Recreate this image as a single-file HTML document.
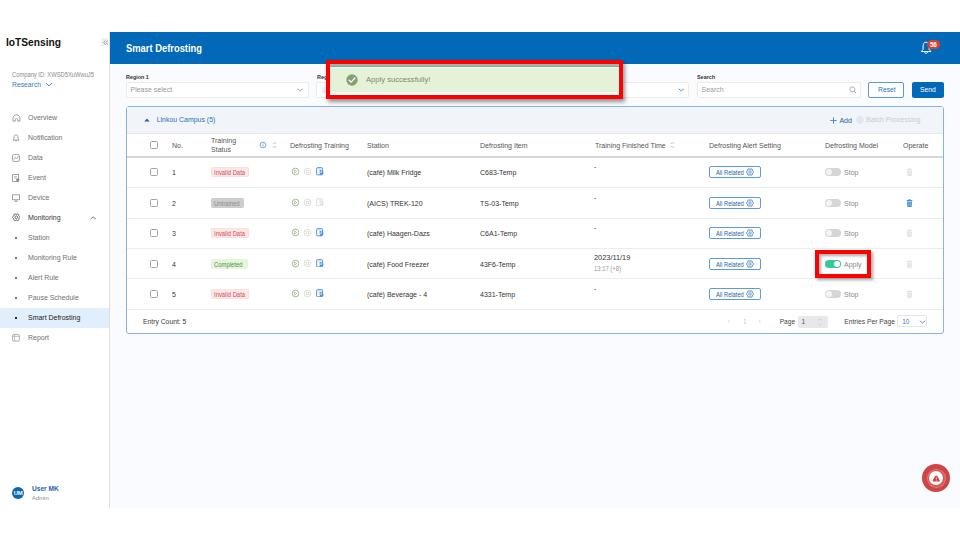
<!DOCTYPE html>
<html><head><meta charset="utf-8">
<style>
*{margin:0;padding:0;box-sizing:border-box}
html,body{width:960px;height:540px;overflow:hidden;background:#fff;font-family:"Liberation Sans",sans-serif;position:relative}
.a{position:absolute;white-space:nowrap}
#side{position:absolute;left:0;top:32px;width:110px;height:476px;background:#fff;border-right:1px solid #dedfe2}
#main{position:absolute;left:110px;top:32px;width:850px;height:476px;background:#f9fbfe}
#hdr{position:absolute;left:110px;top:32px;width:850px;height:32px;background:#0268b8}
.nav{position:absolute;left:28px;font-size:7.3px;color:#707070;transform:scaleX(.955);transform-origin:0 0}
.ico{position:absolute;left:12px}
.dot{position:absolute;left:15.2px;width:1.6px;height:1.6px;background:#777}
.lbl{position:absolute;font-size:5.9px;color:#333;font-weight:bold;top:73.6px;transform:scaleX(.92);transform-origin:0 0}
.sel{position:absolute;top:82px;height:15.5px;background:#fff;border:1px solid #e9ebef;border-radius:2px}
.card{position:absolute;left:126px;top:106.2px;width:818px;height:228px;border:1.2px solid #84b4df;border-radius:3px;background:#fff;overflow:hidden}
.th{position:absolute;font-size:7.4px;color:#555;transform:scaleX(.95);transform-origin:0 0}
.td{position:absolute;font-size:7.4px;color:#333;transform:scaleX(.95);transform-origin:0 0}
.cb{position:absolute;left:150px;width:8px;height:8px;border:1px solid #a4a4a4;border-radius:1.5px;background:#fff}
.badge{position:absolute;left:210.8px;height:9.8px;border-radius:2px;font-size:6.4px;line-height:11.2px;padding-left:3.5px}
.badge span{display:inline-block;transform:scaleX(.92);transform-origin:0 0}
.bad{background:#fde8e8;color:#d24d55;box-shadow:inset 0 0 0 0.6px #fbd8d8}
.rowline{position:absolute;left:127px;width:816px;height:1px;background:#ececec}
.ar{position:absolute;left:709px;width:51.5px;height:12.2px;border:1px solid #5d9cdb;border-radius:2px;font-size:6.4px;color:#2b5fa6;line-height:11.2px;padding-left:5.7px}
.art{display:inline-block;transform:scaleX(.9);transform-origin:0 0}
.tg{position:absolute;left:825px;width:16px;height:8px;border-radius:4px;background:#d6d6d6}
.tg::after{content:"";position:absolute;left:1px;top:1px;width:6px;height:6px;border-radius:50%;background:#f4f4f4}
.stop{position:absolute;left:844px;font-size:7.4px;color:#8a8a8a;transform:scaleX(.95);transform-origin:0 0}
.unt{background:#cdcdcd;color:#8c8c8c}
.cmp{background:#e5f6dc;color:#5b8f4a}
.tg.on{background:#38c69d}
.tg.on::after{left:9px;background:#fff}
</style></head><body>
<div id="side"></div>
<div id="main"></div>
<div id="hdr"></div>

<!-- sidebar -->
<div class="a" style="left:6px;top:36.5px;font-size:10.2px;font-weight:bold;color:#111">IoTSensing</div>
<div class="a" style="left:100.7px;top:38.2px;width:7.5px;height:7.6px;background:#f0f1f3"></div>
<svg class="a" style="left:102.5px;top:39.6px" width="5.5" height="5.2" viewBox="0 0 5.5 5.2"><path d="M2.5 0.4 L0.6 2.6 L2.5 4.8 M4.9 0.4 L3 2.6 L4.9 4.8" fill="none" stroke="#8c8c8c" stroke-width="0.8"/></svg>
<div class="a" style="left:12px;top:70.7px;font-size:6.5px;transform:scaleX(.89);transform-origin:0 0;color:#8a8a8a">Company ID: XWSD5XuWwuJ5</div>
<div class="a" style="left:12px;top:80.4px;font-size:7.3px;transform:scaleX(.93);transform-origin:0 0;color:#3a7bc8">Research</div>
<svg class="a" style="left:45px;top:82px" width="8" height="5" viewBox="0 0 8 5"><path d="M1 1.2 L4 3.8 L7 1.2" fill="none" stroke="#3a7bc8" stroke-width="0.9"/></svg>

<div class="nav" style="top:113.2px">Overview</div>
<div class="nav" style="top:133.2px">Notification</div>
<div class="nav" style="top:153.2px">Data</div>
<div class="nav" style="top:173.2px">Event</div>
<div class="nav" style="top:193.2px">Device</div>
<div class="nav" style="top:213.2px;color:#333">Monitoring</div>
<div class="nav" style="top:233.2px">Station</div>
<div class="nav" style="top:253.2px">Monitoring Rule</div>
<div class="nav" style="top:273.2px">Alert Rule</div>
<div class="nav" style="top:293.2px">Pause Schedule</div>
<div class="a" style="left:0;top:308px;width:109px;height:19.6px;background:#e1eefb"></div>
<div class="nav" style="top:313.2px;color:#222">Smart Defrosting</div>
<div class="nav" style="top:333.2px">Report</div>
<div class="dot" style="top:237px"></div>
<div class="dot" style="top:257px"></div>
<div class="dot" style="top:277px"></div>
<div class="dot" style="top:297px"></div>
<div class="dot" style="top:317px;background:#222"></div>

<!-- user -->
<div class="a" style="left:12px;top:487.3px;width:12px;height:12px;border-radius:50%;background:#0a66b8;color:#fff;font-size:6px;font-weight:bold;line-height:12.4px;text-align:center;letter-spacing:-0.3px">UM</div>
<div class="a" style="left:32px;top:485.2px;font-size:6.6px;font-weight:bold;color:#1f5fae">User MK</div>
<div class="a" style="left:32px;top:494.1px;font-size:6.2px;transform:scaleX(.95);transform-origin:0 0;color:#8e8e8e">Admin</div>

<!-- header -->
<div class="a" style="left:126px;top:43.4px;font-size:10.2px;transform:scaleX(0.92);transform-origin:0 0;font-weight:bold;color:#fff">Smart Defrosting</div>

<!-- filters -->
<div class="lbl" style="left:126px">Region 1</div>
<div class="lbl" style="left:316.5px">Region 2</div>
<div class="lbl" style="left:697px">Search</div>
<div class="sel" style="left:126px;width:182.5px"></div>
<div class="sel" style="left:316px;width:182.3px"></div>
<div class="sel" style="left:506.5px;width:182px"></div>
<div class="sel" style="left:697px;width:163.5px"></div>
<div class="a" style="left:130.5px;top:85.8px;font-size:7px;color:#999">Please select</div>
<div class="a" style="left:701.5px;top:85.8px;font-size:7px;color:#9c9c9c">Search</div>
<div class="a" style="left:868.3px;top:82px;width:35.5px;height:15.8px;border:1px solid #5a9ad8;border-radius:2px;background:#fff"></div><div class="a" style="left:877.5px;top:85.1px;color:#2f73bf;font-size:7.8px;transform:scaleX(.87);transform-origin:0 0">Reset</div>
<div class="a" style="left:911.5px;top:82px;width:32.5px;height:15.8px;border-radius:2px;background:#0268b8"></div><div class="a" style="left:920px;top:85.1px;color:#fff;font-size:7.8px;transform:scaleX(.87);transform-origin:0 0">Send</div>

<!-- card -->
<div class="card"></div>
<div class="a" style="left:127px;top:107.4px;width:816px;height:25.4px;background:#f1f4f8"></div>
<div class="a" style="left:127px;top:132.6px;width:816px;height:0.6px;background:#ebe8e4"></div>
<svg class="a" style="left:143.5px;top:117.6px" width="6" height="4" viewBox="0 0 6 4"><path d="M0.3 3.6 L3 0.4 L5.7 3.6 Z" fill="#1f64b0"/></svg>
<div class="a" style="left:156.7px;top:115.5px;font-size:6.95px;color:#2c6fb8">Linkou Campus (5)</div>
<svg class="a" style="left:830px;top:116.5px" width="7" height="7" viewBox="0 0 7 7"><path d="M3.5 0.3 V6.7 M0.3 3.5 H6.7" stroke="#3d86cf" stroke-width="0.9"/></svg>
<div class="a" style="left:839.4px;top:116.6px;font-size:7px;color:#2a62aa">Add</div>
<svg class="a" style="left:855.5px;top:116px" width="8" height="8" viewBox="0 0 10 10"><path d="M5.00 1.60 L5.46 1.48 L6.01 1.23 L6.63 1.07 L7.20 1.19 L7.59 1.63 L7.76 2.24 L7.81 2.84 L7.94 3.30 L8.28 3.64 L8.77 3.99 L9.22 4.44 L9.40 5.00 L9.22 5.56 L8.77 6.01 L8.28 6.36 L7.94 6.70 L7.81 7.16 L7.76 7.76 L7.59 8.37 L7.20 8.81 L6.63 8.93 L6.01 8.77 L5.46 8.52 L5.00 8.40 L4.54 8.52 L3.99 8.77 L3.37 8.93 L2.80 8.81 L2.41 8.37 L2.24 7.76 L2.19 7.16 L2.06 6.70 L1.72 6.36 L1.23 6.01 L0.78 5.56 L0.60 5.00 L0.78 4.44 L1.23 3.99 L1.72 3.64 L2.06 3.30 L2.19 2.84 L2.24 2.24 L2.41 1.63 L2.80 1.19 L3.37 1.07 L3.99 1.23 L4.54 1.48 Z" fill="none" stroke="#cfd3d8" stroke-width="0.9"/><circle cx="5" cy="5" r="1.7" fill="none" stroke="#cfd3d8" stroke-width="0.9"/></svg>
<div class="a" style="left:866px;top:115.5px;font-size:7px;color:#c9cdd2">Batch Processing</div>
<div class="a" style="left:127px;top:155.7px;width:816px;height:2px;background:#d6d6d6"></div>
<div class="cb" style="top:141px"></div>
<div class="th" style="left:171.5px;top:140.9px">No.</div>
<div class="th" style="left:210.5px;top:136.6px;line-height:8.9px">Training<br>Status</div>
<svg class="a" style="left:259.2px;top:141px" width="8" height="8" viewBox="0 0 8 8"><circle cx="4" cy="4" r="2.9" fill="none" stroke="#4a90d8" stroke-width="0.75"/><rect x="3.65" y="2.3" width="0.7" height="0.7" fill="#4a90d8"/><rect x="3.65" y="3.4" width="0.7" height="2.3" fill="#4a90d8"/></svg>
<svg class="a" style="left:271.5px;top:141px" width="5" height="8" viewBox="0 0 5 8"><path d="M0.8 3 L2.5 1.2 L4.2 3 M0.8 5 L2.5 6.8 L4.2 5" fill="none" stroke="#aaa" stroke-width="0.7"/></svg>
<div class="th" style="left:289.6px;top:140.9px">Defrosting Training</div>
<div class="th" style="left:367px;top:140.9px">Station</div>
<div class="th" style="left:480.3px;top:140.9px">Defrosting Item</div>
<div class="th" style="left:594.7px;top:140.9px">Training Finished Time</div>
<svg class="a" style="left:669.5px;top:141px" width="5" height="8" viewBox="0 0 5 8"><path d="M0.8 3 L2.5 1.2 L4.2 3 M0.8 5 L2.5 6.8 L4.2 5" fill="none" stroke="#aaa" stroke-width="0.7"/></svg>
<div class="th" style="left:709px;top:140.9px">Defrosting Alert Setting</div>
<div class="th" style="left:825px;top:140.9px">Defrosting Model</div>
<div class="th" style="left:903px;top:140.9px">Operate</div>
<div class="cb" style="top:168.2px"></div>
<div class="td" style="left:171.5px;top:168.4px">1</div>
<div class="badge bad" style="top:167.4px;width:38.4px"><span>Invalid Data</span></div>
<svg class="a" style="left:291px;top:167.0px" width="9" height="9" viewBox="0 0 9 9"><circle cx="4.5" cy="4.5" r="3.3" fill="none" stroke="#a6bb93" stroke-width="1"/><path d="M3.6 2.9 L5.9 4.5 L3.6 6.1 Z" fill="none" stroke="#a9bd98" stroke-width="0.8"/></svg>
<svg class="a" style="left:303px;top:167.0px" width="9" height="9" viewBox="0 0 9 9"><circle cx="4.5" cy="4.5" r="3.3" fill="none" stroke="#dddddd" stroke-width="1"/><rect x="3.3" y="3.3" width="2.4" height="2.4" fill="none" stroke="#dcdcdc" stroke-width="0.8"/></svg>
<svg class="a" style="left:315.5px;top:167.2px" width="8" height="8.5" viewBox="0 0 8 8.5"><rect x="0.65" y="0.65" width="5.9" height="7.2" rx="0.8" fill="#dceaf8" stroke="#5596dc" stroke-width="1"/><path d="M2 2.2 V6.4 H4" fill="none" stroke="#fff" stroke-width="1.1"/><path d="M3.8 2.8 L7.4 4.4 L7.4 6.6 L5.8 7.8 L3.8 7.8 Z" fill="#4d92da"/><path d="M4.6 3.9 L6.3 5.1 L4.6 6.3 Z" fill="#fff"/></svg>
<div class="td" style="left:367px;top:168.4px">(café) Milk Fridge</div>
<div class="td" style="left:480.3px;top:168.4px">C683-Temp</div>
<div class="td" style="left:594.1px;top:162.0px">-</div>
<div class="ar" style="top:166.2px"><span class="art">All Related</span><svg style="position:absolute;left:35.7px;top:1.1px" width="8" height="8" viewBox="0 0 10 10"><path d="M5.00 1.60 L5.46 1.48 L6.01 1.23 L6.63 1.07 L7.20 1.19 L7.59 1.63 L7.76 2.24 L7.81 2.84 L7.94 3.30 L8.28 3.64 L8.77 3.99 L9.22 4.44 L9.40 5.00 L9.22 5.56 L8.77 6.01 L8.28 6.36 L7.94 6.70 L7.81 7.16 L7.76 7.76 L7.59 8.37 L7.20 8.81 L6.63 8.93 L6.01 8.77 L5.46 8.52 L5.00 8.40 L4.54 8.52 L3.99 8.77 L3.37 8.93 L2.80 8.81 L2.41 8.37 L2.24 7.76 L2.19 7.16 L2.06 6.70 L1.72 6.36 L1.23 6.01 L0.78 5.56 L0.60 5.00 L0.78 4.44 L1.23 3.99 L1.72 3.64 L2.06 3.30 L2.19 2.84 L2.24 2.24 L2.41 1.63 L2.80 1.19 L3.37 1.07 L3.99 1.23 L4.54 1.48 Z" fill="none" stroke="#2a6db8" stroke-width="1.1"/><circle cx="5" cy="5" r="1.5" fill="none" stroke="#2a6db8" stroke-width="0.8"/></svg></div>
<div class="tg" style="top:168.2px"></div>
<div class="stop" style="top:168.2px">Stop</div>
<svg class="a" style="left:905.6px;top:168.4px" width="7" height="8" viewBox="0 0 7 8"><path d="M0.4 2 C0.4 1.3 1.2 1 2.2 1 H4.8 C5.8 1 6.6 1.3 6.6 2 Z" fill="#e3e3e3"/><rect x="2.4" y="0.2" width="2.2" height="1" rx="0.4" fill="#e3e3e3"/><path d="M1 2.4 H6 L5.7 7.4 C5.7 7.7 5.4 7.9 5.1 7.9 H1.9 C1.6 7.9 1.3 7.7 1.3 7.4 Z" fill="#e3e3e3"/><path d="M2.7 3.3 V7 M4.3 3.3 V7" stroke="#fff" stroke-width="0.45" opacity="0.7"/></svg>
<div class="rowline" style="top:187.0px"></div>
<div class="cb" style="top:198.7px"></div>
<div class="td" style="left:171.5px;top:198.9px">2</div>
<div class="badge unt" style="top:197.9px;width:33px"><span>Untrained</span></div>
<svg class="a" style="left:291px;top:197.5px" width="9" height="9" viewBox="0 0 9 9"><circle cx="4.5" cy="4.5" r="3.3" fill="none" stroke="#a6bb93" stroke-width="1"/><path d="M3.6 2.9 L5.9 4.5 L3.6 6.1 Z" fill="none" stroke="#a9bd98" stroke-width="0.8"/></svg>
<svg class="a" style="left:303px;top:197.5px" width="9" height="9" viewBox="0 0 9 9"><circle cx="4.5" cy="4.5" r="3.3" fill="none" stroke="#dddddd" stroke-width="1"/><rect x="3.3" y="3.3" width="2.4" height="2.4" fill="none" stroke="#dcdcdc" stroke-width="0.8"/></svg>
<svg class="a" style="left:315.5px;top:197.7px" width="8" height="8.5" viewBox="0 0 8 8.5"><rect x="0.65" y="0.65" width="5.9" height="7.2" rx="0.8" fill="#f5f5f5" stroke="#dedede" stroke-width="1"/><path d="M2 2.2 V6.4 H4" fill="none" stroke="#fff" stroke-width="1.1"/><path d="M3.8 2.6 L7.6 4.3 L7.6 6.6 L5.8 7.8 L3.8 7.8 Z" fill="#e0e0e0"/><path d="M4.6 3.9 L6.3 5.1 L4.6 6.3 Z" fill="#fff"/></svg>
<div class="td" style="left:367px;top:198.9px">(AICS) TREK-120</div>
<div class="td" style="left:480.3px;top:198.9px">TS-03-Temp</div>
<div class="td" style="left:594.1px;top:192.5px">-</div>
<div class="ar" style="top:196.7px"><span class="art">All Related</span><svg style="position:absolute;left:35.7px;top:1.1px" width="8" height="8" viewBox="0 0 10 10"><path d="M5.00 1.60 L5.46 1.48 L6.01 1.23 L6.63 1.07 L7.20 1.19 L7.59 1.63 L7.76 2.24 L7.81 2.84 L7.94 3.30 L8.28 3.64 L8.77 3.99 L9.22 4.44 L9.40 5.00 L9.22 5.56 L8.77 6.01 L8.28 6.36 L7.94 6.70 L7.81 7.16 L7.76 7.76 L7.59 8.37 L7.20 8.81 L6.63 8.93 L6.01 8.77 L5.46 8.52 L5.00 8.40 L4.54 8.52 L3.99 8.77 L3.37 8.93 L2.80 8.81 L2.41 8.37 L2.24 7.76 L2.19 7.16 L2.06 6.70 L1.72 6.36 L1.23 6.01 L0.78 5.56 L0.60 5.00 L0.78 4.44 L1.23 3.99 L1.72 3.64 L2.06 3.30 L2.19 2.84 L2.24 2.24 L2.41 1.63 L2.80 1.19 L3.37 1.07 L3.99 1.23 L4.54 1.48 Z" fill="none" stroke="#2a6db8" stroke-width="1.1"/><circle cx="5" cy="5" r="1.5" fill="none" stroke="#2a6db8" stroke-width="0.8"/></svg></div>
<div class="tg" style="top:198.7px"></div>
<div class="stop" style="top:198.7px">Stop</div>
<svg class="a" style="left:905.6px;top:198.9px" width="7" height="8" viewBox="0 0 7 8"><path d="M0.4 2 C0.4 1.3 1.2 1 2.2 1 H4.8 C5.8 1 6.6 1.3 6.6 2 Z" fill="#4a90d8"/><rect x="2.4" y="0.2" width="2.2" height="1" rx="0.4" fill="#4a90d8"/><path d="M1 2.4 H6 L5.7 7.4 C5.7 7.7 5.4 7.9 5.1 7.9 H1.9 C1.6 7.9 1.3 7.7 1.3 7.4 Z" fill="#4a90d8"/><path d="M2.7 3.3 V7 M4.3 3.3 V7" stroke="#fff" stroke-width="0.45" opacity="0.7"/></svg>
<div class="rowline" style="top:217.5px"></div>
<div class="cb" style="top:229.2px"></div>
<div class="td" style="left:171.5px;top:229.4px">3</div>
<div class="badge bad" style="top:228.4px;width:38.4px"><span>Invalid Data</span></div>
<svg class="a" style="left:291px;top:228.0px" width="9" height="9" viewBox="0 0 9 9"><circle cx="4.5" cy="4.5" r="3.3" fill="none" stroke="#a6bb93" stroke-width="1"/><path d="M3.6 2.9 L5.9 4.5 L3.6 6.1 Z" fill="none" stroke="#a9bd98" stroke-width="0.8"/></svg>
<svg class="a" style="left:303px;top:228.0px" width="9" height="9" viewBox="0 0 9 9"><circle cx="4.5" cy="4.5" r="3.3" fill="none" stroke="#dddddd" stroke-width="1"/><rect x="3.3" y="3.3" width="2.4" height="2.4" fill="none" stroke="#dcdcdc" stroke-width="0.8"/></svg>
<svg class="a" style="left:315.5px;top:228.2px" width="8" height="8.5" viewBox="0 0 8 8.5"><rect x="0.65" y="0.65" width="5.9" height="7.2" rx="0.8" fill="#dceaf8" stroke="#5596dc" stroke-width="1"/><path d="M2 2.2 V6.4 H4" fill="none" stroke="#fff" stroke-width="1.1"/><path d="M3.8 2.8 L7.4 4.4 L7.4 6.6 L5.8 7.8 L3.8 7.8 Z" fill="#4d92da"/><path d="M4.6 3.9 L6.3 5.1 L4.6 6.3 Z" fill="#fff"/></svg>
<div class="td" style="left:367px;top:229.4px">(café) Haagen-Dazs</div>
<div class="td" style="left:480.3px;top:229.4px">C6A1-Temp</div>
<div class="td" style="left:594.1px;top:223.0px">-</div>
<div class="ar" style="top:227.2px"><span class="art">All Related</span><svg style="position:absolute;left:35.7px;top:1.1px" width="8" height="8" viewBox="0 0 10 10"><path d="M5.00 1.60 L5.46 1.48 L6.01 1.23 L6.63 1.07 L7.20 1.19 L7.59 1.63 L7.76 2.24 L7.81 2.84 L7.94 3.30 L8.28 3.64 L8.77 3.99 L9.22 4.44 L9.40 5.00 L9.22 5.56 L8.77 6.01 L8.28 6.36 L7.94 6.70 L7.81 7.16 L7.76 7.76 L7.59 8.37 L7.20 8.81 L6.63 8.93 L6.01 8.77 L5.46 8.52 L5.00 8.40 L4.54 8.52 L3.99 8.77 L3.37 8.93 L2.80 8.81 L2.41 8.37 L2.24 7.76 L2.19 7.16 L2.06 6.70 L1.72 6.36 L1.23 6.01 L0.78 5.56 L0.60 5.00 L0.78 4.44 L1.23 3.99 L1.72 3.64 L2.06 3.30 L2.19 2.84 L2.24 2.24 L2.41 1.63 L2.80 1.19 L3.37 1.07 L3.99 1.23 L4.54 1.48 Z" fill="none" stroke="#2a6db8" stroke-width="1.1"/><circle cx="5" cy="5" r="1.5" fill="none" stroke="#2a6db8" stroke-width="0.8"/></svg></div>
<div class="tg" style="top:229.2px"></div>
<div class="stop" style="top:229.2px">Stop</div>
<svg class="a" style="left:905.6px;top:229.4px" width="7" height="8" viewBox="0 0 7 8"><path d="M0.4 2 C0.4 1.3 1.2 1 2.2 1 H4.8 C5.8 1 6.6 1.3 6.6 2 Z" fill="#e3e3e3"/><rect x="2.4" y="0.2" width="2.2" height="1" rx="0.4" fill="#e3e3e3"/><path d="M1 2.4 H6 L5.7 7.4 C5.7 7.7 5.4 7.9 5.1 7.9 H1.9 C1.6 7.9 1.3 7.7 1.3 7.4 Z" fill="#e3e3e3"/><path d="M2.7 3.3 V7 M4.3 3.3 V7" stroke="#fff" stroke-width="0.45" opacity="0.7"/></svg>
<div class="rowline" style="top:248.0px"></div>
<div class="cb" style="top:259.7px"></div>
<div class="td" style="left:171.5px;top:259.9px">4</div>
<div class="badge cmp" style="top:258.9px;width:36.8px"><span>Completed</span></div>
<svg class="a" style="left:291px;top:258.5px" width="9" height="9" viewBox="0 0 9 9"><circle cx="4.5" cy="4.5" r="3.3" fill="none" stroke="#a6bb93" stroke-width="1"/><path d="M3.6 2.9 L5.9 4.5 L3.6 6.1 Z" fill="none" stroke="#a9bd98" stroke-width="0.8"/></svg>
<svg class="a" style="left:303px;top:258.5px" width="9" height="9" viewBox="0 0 9 9"><circle cx="4.5" cy="4.5" r="3.3" fill="none" stroke="#dddddd" stroke-width="1"/><rect x="3.3" y="3.3" width="2.4" height="2.4" fill="none" stroke="#dcdcdc" stroke-width="0.8"/></svg>
<svg class="a" style="left:315.5px;top:258.7px" width="8" height="8.5" viewBox="0 0 8 8.5"><rect x="0.65" y="0.65" width="5.9" height="7.2" rx="0.8" fill="#dceaf8" stroke="#5596dc" stroke-width="1"/><path d="M2 2.2 V6.4 H4" fill="none" stroke="#fff" stroke-width="1.1"/><path d="M3.8 2.8 L7.4 4.4 L7.4 6.6 L5.8 7.8 L3.8 7.8 Z" fill="#4d92da"/><path d="M4.6 3.9 L6.3 5.1 L4.6 6.3 Z" fill="#fff"/></svg>
<div class="td" style="left:367px;top:259.9px">(café) Food Freezer</div>
<div class="td" style="left:480.3px;top:259.9px">43F6-Temp</div>
<div class="td" style="left:594.4px;top:253.2px;font-size:7.75px">2023/11/19</div>
<div class="td" style="left:594.4px;top:265.3px;font-size:6.4px;transform:scaleX(.92);color:#999">13:17 (+8)</div>
<div class="ar" style="top:257.7px"><span class="art">All Related</span><svg style="position:absolute;left:35.7px;top:1.1px" width="8" height="8" viewBox="0 0 10 10"><path d="M5.00 1.60 L5.46 1.48 L6.01 1.23 L6.63 1.07 L7.20 1.19 L7.59 1.63 L7.76 2.24 L7.81 2.84 L7.94 3.30 L8.28 3.64 L8.77 3.99 L9.22 4.44 L9.40 5.00 L9.22 5.56 L8.77 6.01 L8.28 6.36 L7.94 6.70 L7.81 7.16 L7.76 7.76 L7.59 8.37 L7.20 8.81 L6.63 8.93 L6.01 8.77 L5.46 8.52 L5.00 8.40 L4.54 8.52 L3.99 8.77 L3.37 8.93 L2.80 8.81 L2.41 8.37 L2.24 7.76 L2.19 7.16 L2.06 6.70 L1.72 6.36 L1.23 6.01 L0.78 5.56 L0.60 5.00 L0.78 4.44 L1.23 3.99 L1.72 3.64 L2.06 3.30 L2.19 2.84 L2.24 2.24 L2.41 1.63 L2.80 1.19 L3.37 1.07 L3.99 1.23 L4.54 1.48 Z" fill="none" stroke="#2a6db8" stroke-width="1.1"/><circle cx="5" cy="5" r="1.5" fill="none" stroke="#2a6db8" stroke-width="0.8"/></svg></div>
<div class="tg on" style="top:259.7px"></div>
<div class="stop" style="top:259.7px">Apply</div>
<svg class="a" style="left:905.6px;top:259.9px" width="7" height="8" viewBox="0 0 7 8"><path d="M0.4 2 C0.4 1.3 1.2 1 2.2 1 H4.8 C5.8 1 6.6 1.3 6.6 2 Z" fill="#e3e3e3"/><rect x="2.4" y="0.2" width="2.2" height="1" rx="0.4" fill="#e3e3e3"/><path d="M1 2.4 H6 L5.7 7.4 C5.7 7.7 5.4 7.9 5.1 7.9 H1.9 C1.6 7.9 1.3 7.7 1.3 7.4 Z" fill="#e3e3e3"/><path d="M2.7 3.3 V7 M4.3 3.3 V7" stroke="#fff" stroke-width="0.45" opacity="0.7"/></svg>
<div class="rowline" style="top:278.0px"></div>
<div class="cb" style="top:289.7px"></div>
<div class="td" style="left:171.5px;top:289.9px">5</div>
<div class="badge bad" style="top:288.9px;width:38.4px"><span>Invalid Data</span></div>
<svg class="a" style="left:291px;top:288.5px" width="9" height="9" viewBox="0 0 9 9"><circle cx="4.5" cy="4.5" r="3.3" fill="none" stroke="#a6bb93" stroke-width="1"/><path d="M3.6 2.9 L5.9 4.5 L3.6 6.1 Z" fill="none" stroke="#a9bd98" stroke-width="0.8"/></svg>
<svg class="a" style="left:303px;top:288.5px" width="9" height="9" viewBox="0 0 9 9"><circle cx="4.5" cy="4.5" r="3.3" fill="none" stroke="#dddddd" stroke-width="1"/><rect x="3.3" y="3.3" width="2.4" height="2.4" fill="none" stroke="#dcdcdc" stroke-width="0.8"/></svg>
<svg class="a" style="left:315.5px;top:288.7px" width="8" height="8.5" viewBox="0 0 8 8.5"><rect x="0.65" y="0.65" width="5.9" height="7.2" rx="0.8" fill="#dceaf8" stroke="#5596dc" stroke-width="1"/><path d="M2 2.2 V6.4 H4" fill="none" stroke="#fff" stroke-width="1.1"/><path d="M3.8 2.8 L7.4 4.4 L7.4 6.6 L5.8 7.8 L3.8 7.8 Z" fill="#4d92da"/><path d="M4.6 3.9 L6.3 5.1 L4.6 6.3 Z" fill="#fff"/></svg>
<div class="td" style="left:367px;top:289.9px">(café) Beverage - 4</div>
<div class="td" style="left:480.3px;top:289.9px">4331-Temp</div>
<div class="td" style="left:594.1px;top:283.5px">-</div>
<div class="ar" style="top:287.7px"><span class="art">All Related</span><svg style="position:absolute;left:35.7px;top:1.1px" width="8" height="8" viewBox="0 0 10 10"><path d="M5.00 1.60 L5.46 1.48 L6.01 1.23 L6.63 1.07 L7.20 1.19 L7.59 1.63 L7.76 2.24 L7.81 2.84 L7.94 3.30 L8.28 3.64 L8.77 3.99 L9.22 4.44 L9.40 5.00 L9.22 5.56 L8.77 6.01 L8.28 6.36 L7.94 6.70 L7.81 7.16 L7.76 7.76 L7.59 8.37 L7.20 8.81 L6.63 8.93 L6.01 8.77 L5.46 8.52 L5.00 8.40 L4.54 8.52 L3.99 8.77 L3.37 8.93 L2.80 8.81 L2.41 8.37 L2.24 7.76 L2.19 7.16 L2.06 6.70 L1.72 6.36 L1.23 6.01 L0.78 5.56 L0.60 5.00 L0.78 4.44 L1.23 3.99 L1.72 3.64 L2.06 3.30 L2.19 2.84 L2.24 2.24 L2.41 1.63 L2.80 1.19 L3.37 1.07 L3.99 1.23 L4.54 1.48 Z" fill="none" stroke="#2a6db8" stroke-width="1.1"/><circle cx="5" cy="5" r="1.5" fill="none" stroke="#2a6db8" stroke-width="0.8"/></svg></div>
<div class="tg" style="top:289.7px"></div>
<div class="stop" style="top:289.7px">Stop</div>
<svg class="a" style="left:905.6px;top:289.9px" width="7" height="8" viewBox="0 0 7 8"><path d="M0.4 2 C0.4 1.3 1.2 1 2.2 1 H4.8 C5.8 1 6.6 1.3 6.6 2 Z" fill="#e3e3e3"/><rect x="2.4" y="0.2" width="2.2" height="1" rx="0.4" fill="#e3e3e3"/><path d="M1 2.4 H6 L5.7 7.4 C5.7 7.7 5.4 7.9 5.1 7.9 H1.9 C1.6 7.9 1.3 7.7 1.3 7.4 Z" fill="#e3e3e3"/><path d="M2.7 3.3 V7 M4.3 3.3 V7" stroke="#fff" stroke-width="0.45" opacity="0.7"/></svg>
<div class="rowline" style="top:309px"></div>
<div class="a" style="left:142.5px;top:316.9px;font-size:7.3px;transform:scaleX(.93);transform-origin:0 0;color:#3a3a3a">Entry Count: 5</div>
<div class="a" style="left:727.5px;top:317.7px;font-size:7px;color:#d5d5d5">&lsaquo;</div>
<div class="a" style="left:743px;top:318.2px;font-size:6.8px;color:#c8c8c8">1</div>
<div class="a" style="left:758.5px;top:317.7px;font-size:7px;color:#d5d5d5">&rsaquo;</div>
<div class="a" style="left:779.7px;top:318.2px;font-size:6.6px;color:#444">Page</div>
<div class="a" style="left:797.7px;top:316px;width:30px;height:11.6px;background:#e8e8e8;border-radius:2px"></div>
<div class="a" style="left:801.5px;top:318.2px;font-size:6.8px;color:#555">1</div>
<svg class="a" style="left:817px;top:316.8px" width="6" height="10" viewBox="0 0 6 10"><path d="M1 3.6 L3 1.8 L5 3.6 M1 6.4 L3 8.2 L5 6.4" fill="none" stroke="#c4c4c4" stroke-width="0.6"/></svg>
<div class="a" style="left:844.3px;top:318.2px;font-size:6.7px;color:#444">Entries Per Page</div>
<div class="a" style="left:897.3px;top:315.4px;width:30.2px;height:12px;background:#fff;border:1px solid #e4e6ea;border-radius:2px"></div>
<div class="a" style="left:902.3px;top:318.3px;font-size:6.4px;color:#3a78c2">10</div>
<svg class="a" style="left:919px;top:319.8px" width="7" height="4" viewBox="0 0 7 4"><path d="M0.8 0.8 L3.5 3 L6.2 0.8" fill="none" stroke="#3a78c2" stroke-width="0.8"/></svg>


<!-- select chevrons and search icon -->
<svg class="a" style="left:296.8px;top:88px" width="6.5" height="4" viewBox="0 0 6.5 4"><path d="M0.6 0.8 L3.25 2.8 L5.9 0.8" fill="none" stroke="#8a8a8a" stroke-width="0.85"/></svg>
<svg class="a" style="left:677.8px;top:88px" width="6.5" height="4" viewBox="0 0 6.5 4"><path d="M0.6 0.8 L3.25 2.8 L5.9 0.8" fill="none" stroke="#4a90d8" stroke-width="0.95"/></svg>
<svg class="a" style="left:848.6px;top:85.6px" width="8" height="8" viewBox="0 0 8 8"><circle cx="3.4" cy="3.4" r="2.5" fill="none" stroke="#a0a0a0" stroke-width="0.8"/><path d="M5.3 5.3 L7.2 7.2" stroke="#a0a0a0" stroke-width="0.9"/></svg>
<div class="a" style="left:322px;top:85.5px;width:8px;height:8px;border-radius:50%;background:#e3f0fb"></div>

<!-- bell -->
<svg class="a" style="left:920px;top:41px" width="13" height="14" viewBox="0 0 13 14"><path d="M6.1 1.2 C4 1.2 3.1 3 3.1 5 L3.1 8.3 L1.3 10.6 L10.9 10.6 L9.1 8.3 L9.1 5 C9.1 3 8.2 1.2 6.1 1.2 Z" fill="none" stroke="#fff" stroke-width="1" stroke-linejoin="round"/><path d="M4.7 10.9 C4.7 12.9 7.5 12.9 7.5 10.9" fill="none" stroke="#fff" stroke-width="1"/></svg>
<div class="a" style="left:927px;top:40px;width:12.5px;height:9px;border-radius:4.5px;background:#d8412f;color:#fff;font-size:6.4px;font-weight:bold;line-height:9.4px;text-align:center;letter-spacing:-0.2px">56</div>

<!-- sidebar icons -->
<svg class="a" style="left:11.5px;top:114px" width="9" height="8" viewBox="0 0 9 8"><path d="M1 7.1 V4.3 C1 2.2 2.6 0.8 4.5 0.8 C6.4 0.8 8 2.2 8 4.3 V7.1 H5.7 V5.8 C5.7 5.1 5.2 4.6 4.5 4.6 C3.8 4.6 3.3 5.1 3.3 5.8 V7.1 Z" fill="none" stroke="#8a8a8a" stroke-width="0.8" stroke-linejoin="round"/></svg>
<svg class="a" style="left:12px;top:134px" width="8" height="8" viewBox="0 0 8 8"><path d="M4 0.8 C2.6 0.8 2 2 2 3.2 V4.8 L1 6.2 H7 L6 4.8 V3.2 C6 2 5.4 0.8 4 0.8 Z M3.2 6.8 H4.8" fill="none" stroke="#8a8a8a" stroke-width="0.8" stroke-linejoin="round"/></svg>
<svg class="a" style="left:12px;top:154px" width="8" height="8" viewBox="0 0 8 8"><rect x="0.6" y="0.6" width="6.8" height="6.8" rx="1" fill="none" stroke="#8a8a8a" stroke-width="0.8"/><path d="M1.6 5.4 L3.2 3.4 L4.6 4.6 L6.4 2.2" fill="none" stroke="#8a8a8a" stroke-width="0.7"/></svg>
<svg class="a" style="left:12px;top:174px" width="8" height="8" viewBox="0 0 8 8"><rect x="0.6" y="0.6" width="6" height="6.8" fill="none" stroke="#8a8a8a" stroke-width="0.8"/><path d="M2 2.4 H5 M2 4 H5" stroke="#8a8a8a" stroke-width="0.6"/><circle cx="5.8" cy="5.8" r="1.6" fill="#8a8a8a"/></svg>
<svg class="a" style="left:12px;top:194px" width="8" height="8" viewBox="0 0 8 8"><rect x="0.6" y="0.8" width="6.8" height="5" fill="none" stroke="#8a8a8a" stroke-width="0.8"/><path d="M2.4 7.4 H5.6 M4 5.8 V7.4" stroke="#8a8a8a" stroke-width="0.7"/></svg>
<svg class="a" style="left:11.6px;top:213.2px" width="8.6" height="8.6" viewBox="0 0 10 10"><path d="M5.00 1.60 L5.46 1.48 L6.01 1.23 L6.63 1.07 L7.20 1.19 L7.59 1.63 L7.76 2.24 L7.81 2.84 L7.94 3.30 L8.28 3.64 L8.77 3.99 L9.22 4.44 L9.40 5.00 L9.22 5.56 L8.77 6.01 L8.28 6.36 L7.94 6.70 L7.81 7.16 L7.76 7.76 L7.59 8.37 L7.20 8.81 L6.63 8.93 L6.01 8.77 L5.46 8.52 L5.00 8.40 L4.54 8.52 L3.99 8.77 L3.37 8.93 L2.80 8.81 L2.41 8.37 L2.24 7.76 L2.19 7.16 L2.06 6.70 L1.72 6.36 L1.23 6.01 L0.78 5.56 L0.60 5.00 L0.78 4.44 L1.23 3.99 L1.72 3.64 L2.06 3.30 L2.19 2.84 L2.24 2.24 L2.41 1.63 L2.80 1.19 L3.37 1.07 L3.99 1.23 L4.54 1.48 Z" fill="none" stroke="#555" stroke-width="1.1"/><circle cx="5" cy="5" r="1.6" fill="none" stroke="#555" stroke-width="1"/></svg>
<svg class="a" style="left:90px;top:215.8px" width="6.5" height="4" viewBox="0 0 6.5 4"><path d="M0.6 3 L3.25 1 L5.9 3" fill="none" stroke="#666" stroke-width="0.85"/></svg>
<svg class="a" style="left:12px;top:334.2px" width="8" height="7.6" viewBox="0 0 8 7.6"><rect x="0.6" y="0.6" width="6.8" height="6.4" rx="1" fill="none" stroke="#999" stroke-width="0.8"/><path d="M0.6 2.4 H7.4 M2.6 0.6 V7" stroke="#a8a8a8" stroke-width="0.7"/></svg>

<!-- floating button -->
<div class="a" style="left:922px;top:464px;width:28px;height:28px;border-radius:50%;background:#cd4545"></div>
<div class="a" style="left:926.5px;top:468.5px;width:19px;height:19px;border-radius:50%;background:#e37b7b"></div>
<div class="a" style="left:927.5px;top:469.5px;width:17px;height:17px;border-radius:50%;background:#d75757"></div>
<div class="a" style="left:929px;top:471px;width:14px;height:14px;border-radius:50%;background:#fff"></div>
<svg class="a" style="left:931.8px;top:474.8px" width="8.5" height="7" viewBox="0 0 8.5 7"><path d="M4.25 0.4 C5.2 0.4 5.6 1.2 5.9 2 L7.6 5 C8.1 6 7.6 6.6 6.8 6.6 H1.7 C0.9 6.6 0.4 6 0.9 5 L2.6 2 C2.9 1.2 3.3 0.4 4.25 0.4 Z" fill="#d04545"/><rect x="3.9" y="2.2" width="0.7" height="2.2" rx="0.3" fill="#fff"/><rect x="3.9" y="4.9" width="0.7" height="0.7" fill="#fff"/></svg>

<!-- toast -->
<div class="a" style="left:328px;top:62px;width:293px;height:35px;background:#fff"></div>
<div class="a" style="left:330px;top:64px;width:289px;height:2.3px;background:#9fb79c"></div>
<div class="a" style="left:330px;top:66.3px;width:289px;height:1px;background:#77a9cc"></div>
<div class="a" style="left:330px;top:67.3px;width:288px;height:24.5px;background:#e6f2d7"></div>
<div class="a" style="left:330px;top:91.8px;width:288px;height:1.5px;background:linear-gradient(#eef6e4,#fff)"></div>
<div class="a" style="left:330px;top:67.3px;width:288px;height:0.8px;background:#f4f8dc"></div>
<svg class="a" style="left:346px;top:73.7px" width="12" height="12" viewBox="0 0 12 12"><circle cx="6" cy="6" r="5.7" fill="#87a06f"/><path d="M3.2 6.2 L5.2 8.1 L8.9 4" fill="none" stroke="#fff" stroke-width="1.3" stroke-linecap="round" stroke-linejoin="round"/></svg>
<div class="a" style="left:365.8px;top:75.2px;font-size:7.9px;transform:scaleX(.965);transform-origin:0 0;color:#7a8a62">Apply successfully!</div>
<div class="a" style="left:326px;top:60px;width:297px;height:39px;border:4px solid #ff0000;box-shadow:1.5px 2.5px 4px rgba(0,0,0,.42)"></div>

<!-- apply red box -->
<div class="a" style="left:815px;top:250px;width:56px;height:28px;border:4px solid #ff0000;box-shadow:2px 2px 3px rgba(0,0,0,.35), inset 2px 2px 3px rgba(0,0,0,.32)"></div>
</body></html>
